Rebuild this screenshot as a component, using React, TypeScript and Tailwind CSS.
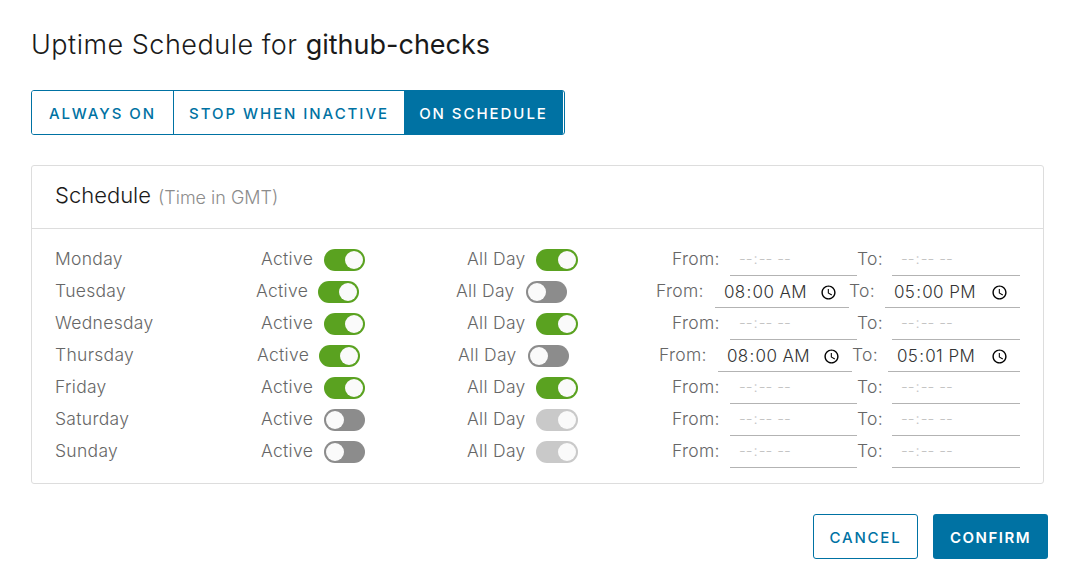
type Day = {
  name: string
  active: boolean
  allDay: boolean
  allDayDisabled?: boolean
  dayWidth: string
  activeWidth: string
  allDayGap: string
  allDayWidth: string
  allDayToggle: string
  fromGap: string
  fromLabel: string
  fromWidth: string
  toLabel: string
  toWidth: string
  from?: string
  to?: string
}

const plain = {
  dayWidth: "w-[206px]",
  activeWidth: "w-[63px]",
  allDayGap: "ml-[102px]",
  allDayWidth: "w-[69px]",
  allDayToggle: "w-[42px]",
  fromGap: "ml-[94px]",
  fromLabel: "w-[58px]",
  fromWidth: "w-[127px]",
  toLabel: "w-[35px]",
  toWidth: "w-[128px]",
}

const days: Day[] = [
  { name: "Monday", active: true, allDay: true, ...plain },
  {
    name: "Tuesday",
    active: true,
    allDay: false,
    dayWidth: "w-[201px]",
    activeWidth: "w-[62px]",
    allDayGap: "ml-[97px]",
    allDayWidth: "w-[70px]",
    allDayToggle: "w-[41px]",
    fromGap: "ml-[89px]",
    fromLabel: "w-[59px]",
    fromWidth: "w-[134px]",
    toLabel: "w-[36px]",
    toWidth: "w-[135px]",
    from: "08:00",
    to: "17:00",
  },
  { name: "Wednesday", active: true, allDay: true, ...plain },
  {
    name: "Thursday",
    active: true,
    allDay: false,
    dayWidth: "w-[202px]",
    activeWidth: "w-[62px]",
    allDayGap: "ml-[98px]",
    allDayWidth: "w-[70px]",
    allDayToggle: "w-[41px]",
    fromGap: "ml-[90px]",
    fromLabel: "w-[59px]",
    fromWidth: "w-[134px]",
    toLabel: "w-[36px]",
    toWidth: "w-[132px]",
    from: "08:00",
    to: "17:01",
  },
  { name: "Friday", active: true, allDay: true, ...plain },
  { name: "Saturday", active: false, allDay: true, allDayDisabled: true, ...plain },
  { name: "Sunday", active: false, allDay: true, allDayDisabled: true, ...plain },
]

function Toggle({ on, disabled, width }: { on: boolean; disabled?: boolean; width: string }) {
  const color = disabled ? "bg-[#c9c9c9]" : on ? "bg-[#5aa220]" : "bg-[#8c8c8c]"
  return (
    <span className={`flex h-[22px] shrink-0 rounded-full p-[2px] ${width} ${color} ${on ? "justify-end" : "justify-start"}`}>
      <span className="size-[18px] rounded-full bg-[#fafafa]" />
    </span>
  )
}

function TimeField({ value, width }: { value?: string; width: string }) {
  return (
    <input
      type="time"
      disabled={!value}
      defaultValue={value}
      className={`h-8 shrink-0 border-b border-[#b3b3b3] bg-transparent pl-2 pr-2 font-light outline-none ${width} ${value ? "pt-[2px] text-[17px] tracking-[0.3px] text-[#333333]" : "text-[15px] text-[#c4c4c4]"}`}
    />
  )
}

function DayRow({ day }: { day: Day }) {
  return (
    <div className="flex h-8 items-center whitespace-nowrap text-[#666666]">
      <span className={`-mt-[2px] shrink-0 ${day.dayWidth}`}>{day.name}</span>
      <span className={`-mt-[2px] shrink-0 ${day.activeWidth}`}>Active</span>
      <Toggle on={day.active} width="w-[41px]" />
      <span className={`-mt-[2px] shrink-0 ${day.allDayGap} ${day.allDayWidth}`}>All Day</span>
      <Toggle on={day.allDay} disabled={day.allDayDisabled} width={day.allDayToggle} />
      <span className={`-mt-[2px] shrink-0 ${day.fromGap} ${day.fromLabel}`}>From:</span>
      <TimeField value={day.from} width={day.fromWidth} />
      <span className={`-mt-[2px] shrink-0 ${day.toLabel}`}>To:</span>
      <TimeField value={day.to} width={day.toWidth} />
    </div>
  )
}

export default function App() {
  const modes = [
    { label: "ALWAYS ON", width: "w-[141px]", cls: "bg-white text-[#0072a3]" },
    { label: "STOP WHEN INACTIVE", width: "w-[231px]", cls: "border-l border-[#0072a3] bg-white text-[#0072a3]" },
    { label: "ON SCHEDULE", width: "w-[159px]", cls: "bg-[#0072a3] text-white" },
  ]

  return (
    <div className="h-[588px] w-[1074px] overflow-hidden bg-white pl-[31px] pt-[27px] font-['Inter',sans-serif]">
      <h1 className="whitespace-nowrap text-[27px] font-light leading-9 tracking-[0.5px] text-[#1a1a1a]">
        Uptime Schedule for <span className="font-normal tracking-normal">github-checks</span>
      </h1>

      <div className="mt-[27px] flex h-[45px] w-[534px] overflow-hidden rounded-[3px] border border-[#0072a3]">
        {modes.map((m) => (
          <button key={m.label} className={`${m.width} pt-[3px] text-[15px] font-medium tracking-[0.13em] ${m.cls}`}>
            {m.label}
          </button>
        ))}
      </div>

      <section className="mt-[30px] h-[319px] w-[1013px] rounded-[3px] border border-[#dddddd]">
        <div className="flex h-[63px] items-center border-b border-[#dddddd] pl-[23px]">
          <span className="mb-[4px] text-[22px] font-light text-[#1a1a1a]">Schedule</span>
          <span className="ml-[7px] text-[18px] font-light text-[#8c8c8c]">(Time in GMT)</span>
        </div>
        <div className="pl-[23px] pt-[15px] text-[17.5px] font-light tracking-[0.3px]">
          {days.map((d) => (
            <DayRow key={d.name} day={d} />
          ))}
        </div>
      </section>

      <div className="mt-[30px] flex w-[1017px] justify-end gap-[15px]">
        <button className="h-[45px] w-[105px] rounded-[3px] border border-[#0072a3] bg-white pt-[3px] text-[15px] font-medium tracking-[0.12em] text-[#0072a3]">
          CANCEL
        </button>
        <button className="h-[45px] w-[115px] rounded-[3px] bg-[#0072a3] pt-[3px] text-[15px] font-semibold tracking-[0.1em] text-white">
          CONFIRM
        </button>
      </div>
    </div>
  )
}
